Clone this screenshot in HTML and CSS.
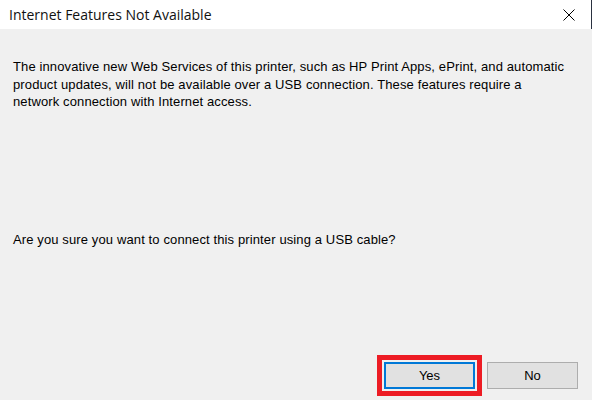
FILE: index.html
```html
<!DOCTYPE html>
<html lang="en">

<head>
  <meta charset="UTF-8" />
  <title>Internet Features Not Available</title>
  <link rel="stylesheet" href="styles.css">
</head>

<body>

  <div class="dialog">
    <!-- Title bar -->
    <div class="titlebar">
      <span class="title">Internet Features Not Available</span>
      <span class="close" title="Close">
        <svg width="12" height="12" viewBox="0 0 12 12">
          <path d="M0.5 0.5 L11.5 11.5 M11.5 0.5 L0.5 11.5" stroke="#000" stroke-width="1" fill="none" />
        </svg>
      </span>
    </div>

    <!-- Message -->
    <div class="body">
      <p class="message">The innovative new Web Services of this printer, such as HP Print Apps, ePrint, and automatic
        product updates, will not be available over a USB connection. These features require a
        network connection with Internet access.</p>
      <p class="question">Are you sure you want to connect this printer using a USB cable?</p>

      <div class="buttons">
        <button class="btn default">Yes</button>
        <button class="btn">No</button>
      </div>
    </div>
  </div>

</body>

</html>
```

FILE: styles.css
```css
* {
  box-sizing: border-box;
}

body {
  margin: 0;
  background: #f0f0f0;
  font-family: 'Liberation Sans', Arial, sans-serif;
  color: #000;
  height: 400px;
  overflow: hidden;
}

.dialog {
  display: flex;
  flex-direction: column;
  height: 400px;
}

/* Title bar */
.titlebar {
  height: 29px;
  background: #fff;
  border-right: 1px solid #2a3140;
  display: flex;
  align-items: center;
  justify-content: space-between;
  padding: 0 16px 0 9px;
}

.title {
  font-family: 'Open Sans', sans-serif;
  font-size: 14px;
  color: #111;
}

.close {
  display: flex;
  align-items: center;
  padding-top: 1px;
}

/* Body */
.body {
  flex: 1;
  display: flex;
  flex-direction: column;
  padding: 0 14px 11px 13px;
}

.message {
  margin: 29px 0 0;
  font-size: 13px;
  letter-spacing: 0.12px;
  line-height: 17.5px;
  white-space: pre-line;
}

.question {
  margin: 120px 0 0;
  font-size: 13px;
  letter-spacing: 0.12px;
  line-height: 17px;
}

.buttons {
  margin-top: auto;
  display: flex;
  justify-content: flex-end;
  gap: 12px;
}

.btn {
  width: 91px;
  height: 27px;
  background: #e1e1e1;
  border: 1px solid #adadad;
  font-family: 'Liberation Sans', Arial, sans-serif;
  font-size: 13px;
  color: #000;
  padding: 0;
}

.btn.default {
  border: 2px solid #0078d7;
  outline: 5px solid #ed1c24;
  outline-offset: 2px;
}
```
